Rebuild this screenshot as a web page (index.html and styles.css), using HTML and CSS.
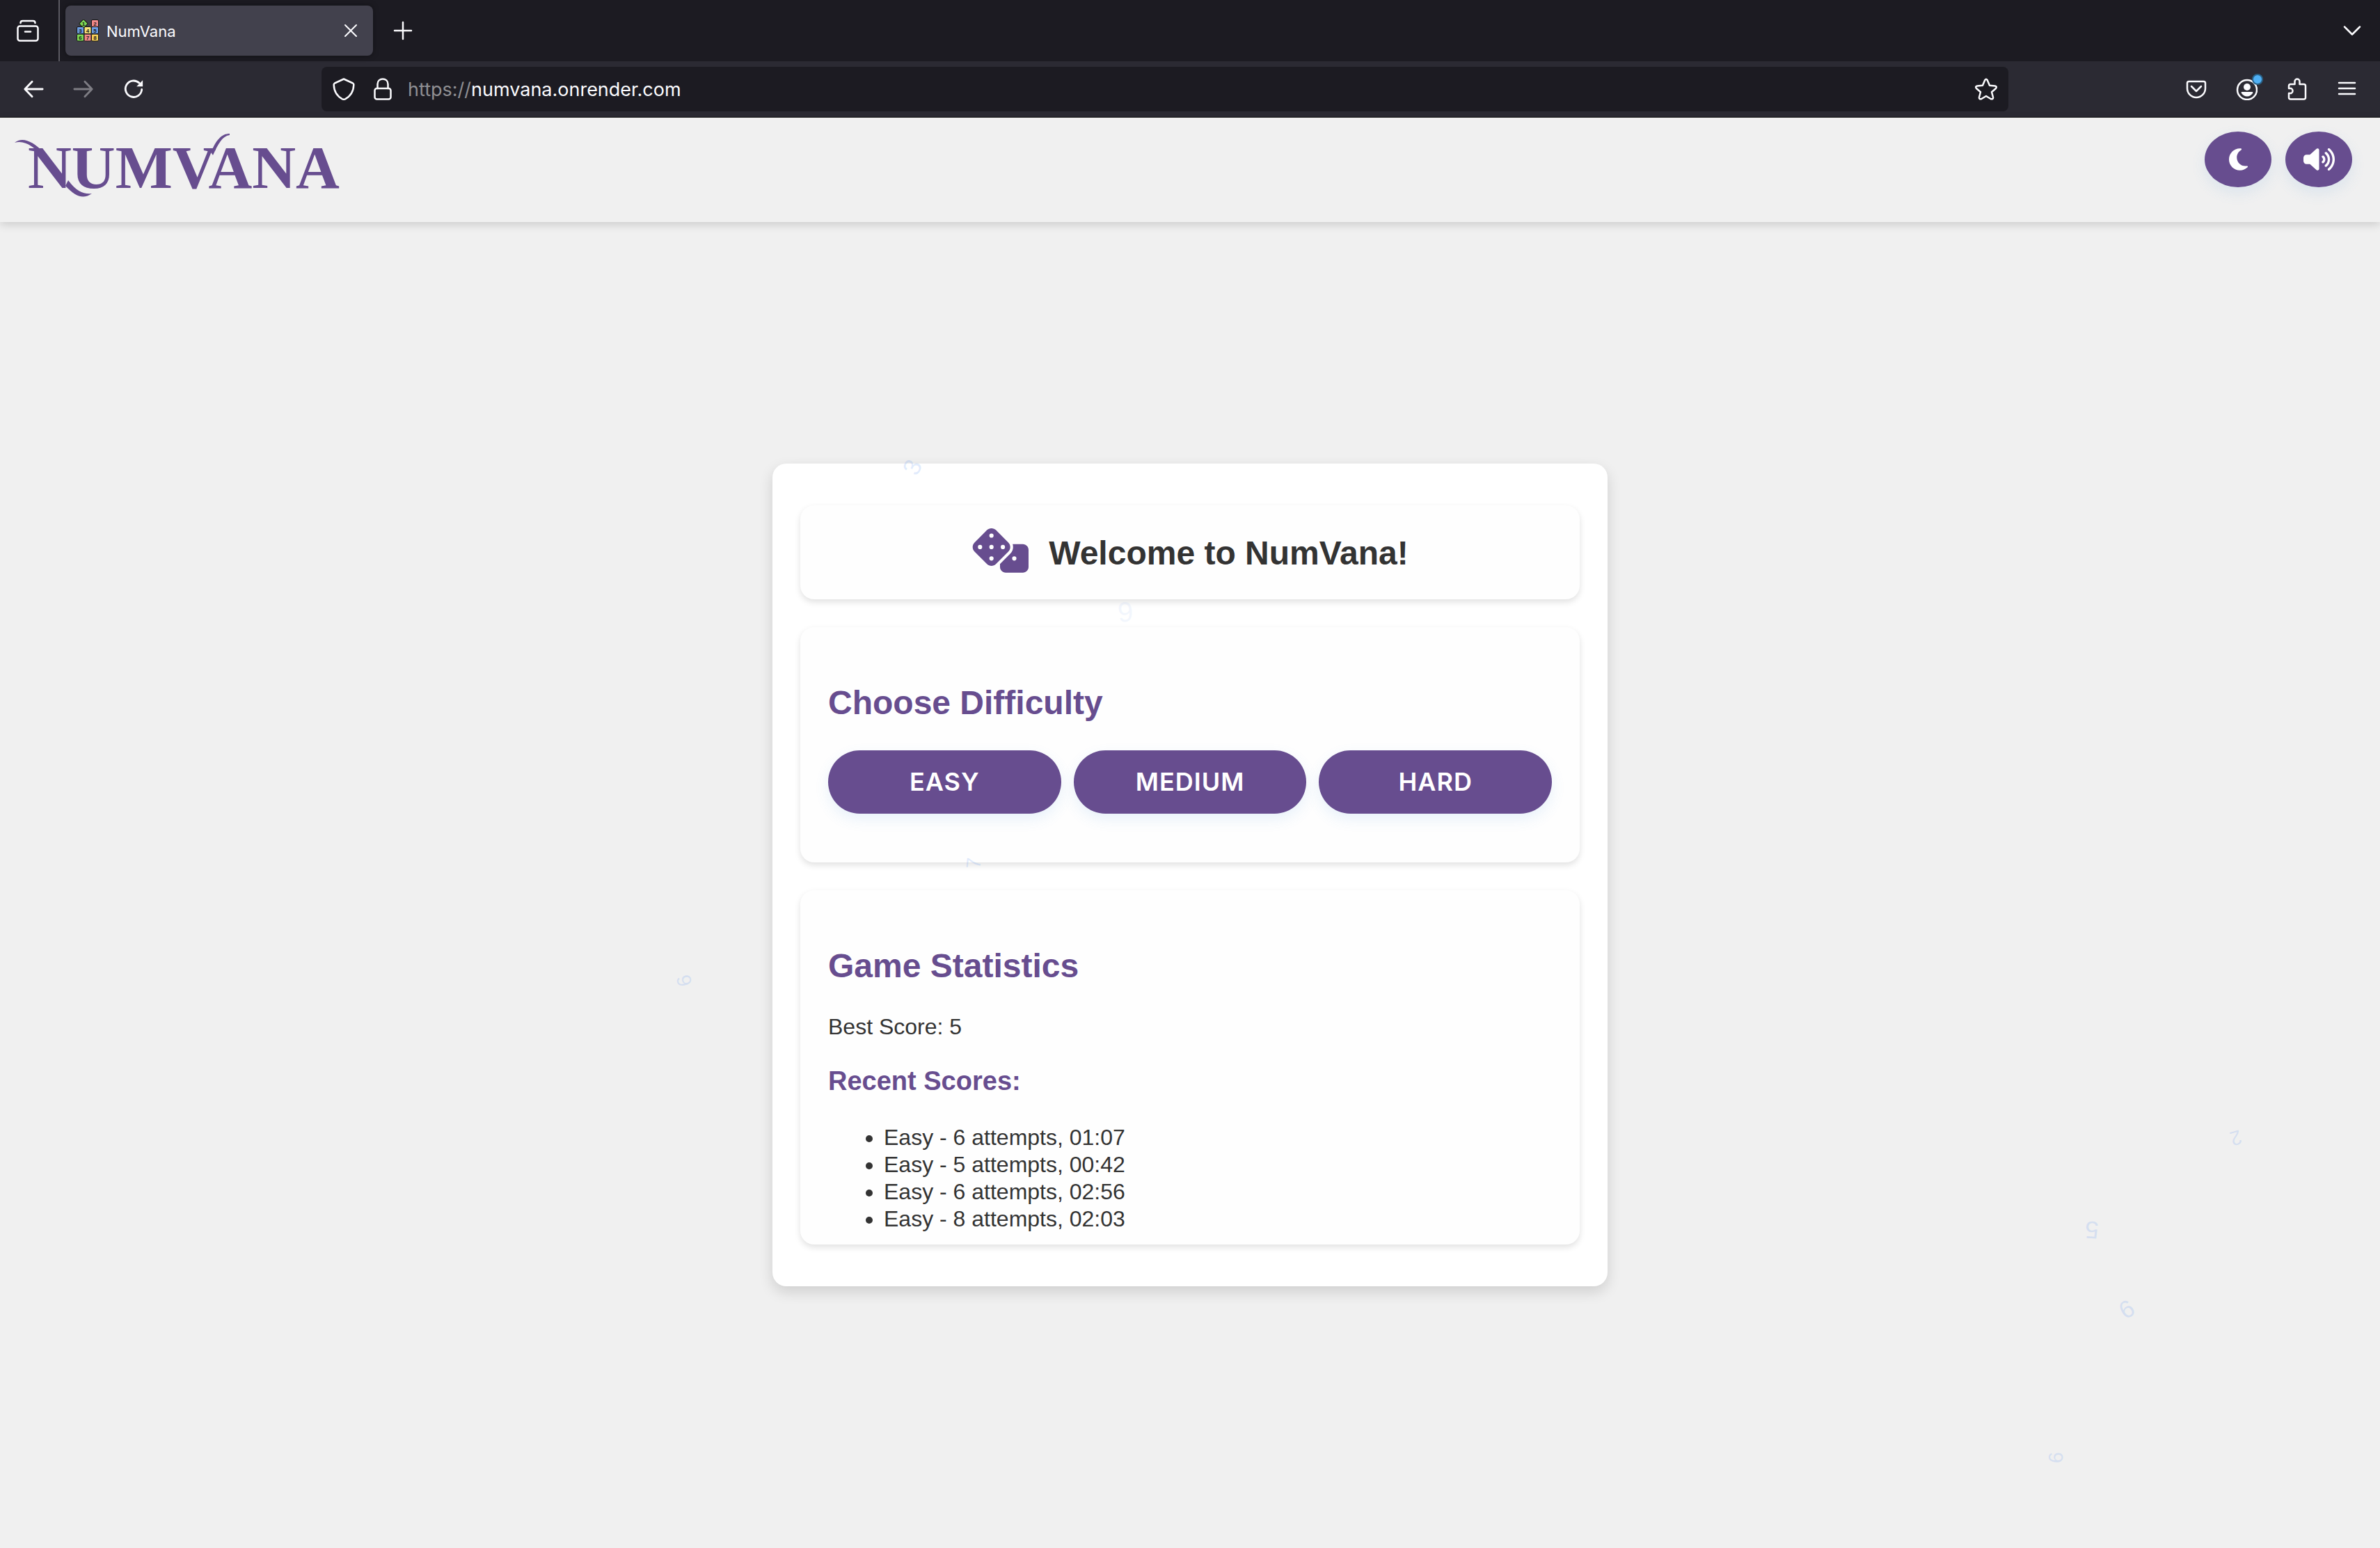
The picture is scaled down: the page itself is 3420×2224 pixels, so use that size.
FILE: index.html
```html
<!DOCTYPE html>
<html lang="en">
<head>
<meta charset="utf-8">
<title>NumVana</title>
<link rel="stylesheet" href="styles.css">
</head>
<body>
<div class="browser">
  <div class="tabstrip">
    <button class="tool view-button" aria-label="Recent browsing">
      <svg class="icon" viewBox="0 0 32 32"><path d="M5.500 5C5.500 2.500 7 2 8.500 2H23.500C25 2 26.500 2.500 26.500 5" /><rect x="1.500" y="9.500" width="29" height="21" rx="3"/><path d="M12 17.500H20"/></svg>
    </button>
    <div class="tab">
      <svg class="favicon" viewBox="0 0 32 32">
        <g stroke="#151515" stroke-width="1">
          <rect x="5.500" y="1.500" width="9" height="9" rx="1" fill="#7ed957" transform="rotate(45 10 6)"/>
          <rect x="21.500" y=".5" width="10" height="10" rx="1.500" fill="#f08a8a"/>
          <rect x=".5" y="10.500" width="10" height="10" rx="1.500" fill="#6b9be0"/>
          <rect x="11" y="10.500" width="10" height="10" rx="1.500" fill="#f6e27a"/>
          <rect x="21.500" y="10.500" width="10" height="10" rx="1.500" fill="#6b9be0"/>
          <rect x=".5" y="21" width="10" height="10" rx="1.500" fill="#7ed957"/>
          <rect x="11" y="21" width="10" height="10" rx="1.500" fill="#f08a8a"/>
          <rect x="21.500" y="21" width="10" height="10" rx="1.500" fill="#f6cf5a"/>
        </g>
        <g class="favicon-digits"><text x="10" y="9">1</text><text x="26.500" y="8.500">2</text><text x="5.500" y="18.500">3</text><text x="16" y="18.500">4</text><text x="26.500" y="18.500">5</text><text x="5.500" y="29">6</text><text x="16" y="29">7</text><text x="26.500" y="29">8</text></g>
      </svg>
      <span class="tab-title">NumVana</span>
      <button class="tab-close" aria-label="Close tab"><svg class="icon-small" viewBox="0 0 20 20"><path d="M2 2L18 18M18 2L2 18"/></svg></button>
    </div>
    <button class="tool new-tab" aria-label="New tab"><svg class="icon" viewBox="0 0 32 32"><path d="M16 4V28M4 16H28"/></svg></button>
    <button class="tool list-tabs" aria-label="List all tabs"><svg class="icon" viewBox="0 0 32 32"><path d="M5 10.500L16 21.500L27 10.500"/></svg></button>
  </div>
  <div class="toolbar">
    <button class="tool" aria-label="Back"><svg class="icon thick" viewBox="0 0 32 32"><path d="M30 16H3.500M14 4.500L3 16L14 27.500"/></svg></button>
    <button class="tool dim" aria-label="Forward" disabled><svg class="icon thick" viewBox="0 0 32 32"><path d="M2 16H28.500M18 4.500L29 16L18 27.500"/></svg></button>
    <button class="tool" aria-label="Reload"><svg class="icon thick" viewBox="0 0 32 32"><path d="M28.500 16.500A12.500 12.500 0 1 1 24.500 6.500"/><path d="M30 2.500V12H20.500Z" fill="currentColor" stroke="none"/></svg></button>
    <form class="urlbar">
      <button type="button" class="url-tool" aria-label="Tracking protection"><svg class="icon" viewBox="0 0 32 32"><path d="M16 1.500L29 7.500Q30.500 8.500 30.300 10C30 19 26 26 18 30.300Q16 31.300 14 30.300C6 26 2 19 1.700 10Q1.500 8.500 3 7.500Z"/></svg></button>
      <button type="button" class="url-tool" aria-label="Site information"><svg class="icon" viewBox="0 0 32 32"><rect x="4.500" y="15" width="23" height="15.500" rx="3"/><path d="M8.500 15V9C8.500 4 12 1.500 16 1.500S23.500 4 23.500 9V15"/></svg></button>
      <label class="scheme" for="url">https://</label>
      <input class="url" id="url" type="text" value="numvana.onrender.com">
      <button type="button" class="url-tool" aria-label="Bookmark this page"><svg class="icon" viewBox="0 0 32 32"><path d="M14.200 3.200Q16 .5 17.800 3.200L21 10.700L28.800 11.500Q32 12.300 30 15L24 20.200L26 27.800Q26.300 31 23 30.200L16 26L9 30.200Q5.700 31 6 27.800L8 20.200L2 15Q0 12.300 3.200 11.500L11 10.700Z"/></svg></button>
    </form>
    <button class="tool" aria-label="Save to Pocket"><svg class="icon" viewBox="0 0 32 32"><path d="M5.500 5H26.500Q29 5 29 7.500V15A13 13 0 0 1 3 15V7.500Q3 5 5.500 5Z"/><path d="M9 12L16 19L23 12"/></svg></button>
    <button class="tool account" aria-label="Account"><svg class="icon" viewBox="0 0 32 32"><circle cx="17" cy="17" r="14"/><g fill="currentColor" stroke="none"><circle cx="17" cy="13" r="5"/><path d="M9.500 20H24.500Q26 20.500 25 22A9.500 9.500 0 0 1 9 22Q8 20.500 9.500 20Z"/></g></svg><span class="badge"></span></button>
    <button class="tool" aria-label="Extensions"><svg class="icon" viewBox="0 0 32 32"><path d="M7.500 9H13.500V5A3.500 3.500 0 0 1 20.500 5V9H26.500Q29 9 29 11.500V28Q29 30.500 26.500 30.500H7.500Q5 30.500 5 28V22H8.500A4 4 0 0 0 8.500 15H5V11.500Q5 9 7.500 9Z"/></svg></button>
    <button class="tool" aria-label="Menu"><svg class="icon" viewBox="0 0 32 32"><path d="M5 7H28M5 15H28M5 23H28"/></svg></button>
  </div>
</div>

<header class="header">
  <a class="logo" href="#">
    <span class="wordmark">NUMVANA</span>
    <svg class="flourish" viewBox="0 0 480 110">
      <path d="M1 16C12 7 27 14 42 29L42 37C29 22 16 12 1 16Z"/>
      <path d="M78 70C91 87 100 90 112 89C99 98 88 93 74 78Z"/>
      <path d="M283 30C291 11 299 3 310 3V5C299 7 294 17 286 34Z"/>
    </svg>
  </a>
  <div class="header-actions">
    <button class="round" aria-label="Dark mode"><svg class="glyph" viewBox="0 0 384 512"><path d="M223.500 32C100 32 0 132.300 0 256S100 480 223.500 480c60.600 0 115.500-24.200 155.800-63.400c5-4.900 6.300-12.500 3.100-18.700s-10.100-9.700-17-8.500c-9.800 1.700-19.800 2.600-30.100 2.600c-96.900 0-175.500-78.800-175.500-176c0-65.800 36-123.100 89.300-153.300c6.100-3.500 9.200-10.500 7.700-17.300s-7.300-11.900-14.300-12.500c-6.300-.5-12.600-.8-19-.8z"/></svg></button>
    <button class="round" aria-label="Sound"><svg class="glyph" viewBox="0 0 640 512"><path d="M533.600 32.500C598.500 85.300 640 165.800 640 256s-41.500 170.800-106.400 223.500c-10.300 8.400-25.400 6.800-33.800-3.500s-6.800-25.400 3.500-33.800C557.500 398.200 592 331.200 592 256s-34.500-142.200-88.700-186.300c-10.300-8.400-11.800-23.500-3.500-33.800s23.500-11.800 33.800-3.500zM473.100 107c43.200 35.200 70.900 88.900 70.900 149s-27.700 113.800-70.900 149c-10.300 8.400-25.400 6.800-33.800-3.500s-6.800-25.400 3.500-33.800C475.300 341.300 496 301.100 496 256s-20.700-85.300-53.200-111.800c-10.300-8.400-11.800-23.500-3.500-33.800s23.500-11.800 33.800-3.500zm-60.500 74.500C434.100 199.100 448 225.900 448 256s-13.900 56.900-35.400 74.500c-10.300 8.400-25.400 6.800-33.800-3.500s-6.800-25.400 3.500-33.800C393.100 284.400 400 271 400 256s-6.900-28.400-17.700-37.300c-10.300-8.400-11.800-23.500-3.500-33.800s23.500-11.800 33.800-3.500zM301.100 34.800C312.600 40 320 51.400 320 64V448c0 12.600-7.400 24-18.900 29.200s-25 3.100-34.400-5.300L131.800 352H64c-35.300 0-64-28.700-64-64V224c0-35.300 28.700-64 64-64h67.800L266.700 40.100c9.400-8.400 22.900-10.400 34.400-5.200z"/></svg></button>
  </div>
</header>

<main class="main">
  <div class="card">
    <section class="panel welcome">
      <svg class="dice" viewBox="0 0 640 512"><path d="M274.900 34.300c-28.100-28.100-73.700-28.100-101.800 0L34.300 173.100c-28.100 28.100-28.100 73.700 0 101.800L173.100 413.700c28.100 28.100 73.700 28.100 101.800 0L413.700 274.900c28.100-28.100 28.100-73.700 0-101.800L274.900 34.300zM200 224a24 24 0 1 1 48 0 24 24 0 1 1 -48 0zM96 200a24 24 0 1 1 0 48 24 24 0 1 1 0-48zM224 376a24 24 0 1 1 0-48 24 24 0 1 1 0 48zM352 200a24 24 0 1 1 0 48 24 24 0 1 1 0-48zM224 120a24 24 0 1 1 0-48 24 24 0 1 1 0 48zm96 328c0 35.300 28.700 64 64 64H576c35.300 0 64-28.700 64-64V256c0-35.300-28.700-64-64-64H461.700c11.600 36 3.100 77-25.400 105.500L320 413.800V448zM480 328a24 24 0 1 1 0 48 24 24 0 1 1 0-48z"/></svg>
      <h1 class="title">Welcome to NumVana!</h1>
    </section>
    <section class="panel difficulty">
      <h2 class="heading">Choose Difficulty</h2>
      <div class="levels">
        <button class="level">EASY</button>
        <button class="level">MEDIUM</button>
        <button class="level">HARD</button>
      </div>
    </section>
    <section class="panel stats">
      <h2 class="heading">Game Statistics</h2>
      <p class="best">Best Score: 5</p>
      <h3 class="subheading">Recent Scores:</h3>
      <ul class="scores">
        <li>Easy - 6 attempts, 01:07</li>
        <li>Easy - 5 attempts, 00:42</li>
        <li>Easy - 6 attempts, 02:56</li>
        <li>Easy - 8 attempts, 02:03</li>
      </ul>
    </section>
  </div>
</main>

<div class="drift" aria-hidden="true">
  <span class="digit large d1">3</span>
  <span class="digit huge d2">9</span>
  <span class="digit d3">7</span>
  <span class="digit d4">6</span>
  <span class="digit d5">2</span>
  <span class="digit large d6">5</span>
  <span class="digit large d7">6</span>
  <span class="digit d8">6</span>
</div>
</body>
</html>
```

FILE: styles.css
```css
* { box-sizing: border-box; }

body {
  position: relative;
  display: flex;
  flex-direction: column;
  min-height: 100vh;
  margin: 0;
  background: #f0f0f0;
  color: #333;
  font-family: "Liberation Sans", Arial, sans-serif;
  font-size: 32px;
  line-height: 39px;
}

button {
  border: 0;
  padding: 0;
  background: none;
  color: inherit;
  font: inherit;
}

/* Browser chrome */
.browser {
  border-bottom: 1px solid #0c0c0d;
  background: #2b2a33;
  color: #fbfbfe;
  font-family: Inter, "Liberation Sans", sans-serif;
}

.tabstrip {
  display: flex;
  align-items: center;
  height: 88px;
  background: #1c1b22;
}

.tool,
.url-tool {
  display: flex;
  align-items: center;
  justify-content: center;
  width: 72px;
  height: 64px;
}

.icon {
  width: 32px;
  height: 32px;
  fill: none;
  stroke: currentColor;
  stroke-width: 2.5;
  stroke-linecap: round;
  stroke-linejoin: round;
}

.thick { width: 30px; height: 30px; stroke-width: 3; }

.view-button {
  width: 86px;
  height: 88px;
  padding-right: 4px;
  border-right: 2px solid #5b5a62;
}

.tab {
  display: flex;
  align-items: center;
  width: 442px;
  height: 72px;
  margin: 0 7px 0 8px;
  padding: 0 16px;
  border-radius: 8px;
  background: #42414d;
  box-shadow: 0 0 8px rgba(0, 0, 0, 0.4);
}

.favicon { width: 32px; height: 32px; }

.favicon-digits {
  font: bold 8px "Liberation Sans", sans-serif;
  text-anchor: middle;
  fill: #151515;
}

.tab-title {
  flex: 1;
  margin-left: 11px;
  padding-top: 2px;
  font-size: 22px;
  line-height: 32px;
}

.tab-close { display: flex; padding: 6px; }

.icon-small {
  width: 20px;
  height: 20px;
  fill: none;
  stroke: currentColor;
  stroke-width: 2;
  stroke-linecap: round;
}

.list-tabs { margin-left: auto; margin-right: 4px; }

.toolbar {
  display: flex;
  align-items: center;
  padding: 8px 12px;
}

.dim { color: #7e7d84; }

.urlbar {
  display: flex;
  flex: 1;
  align-items: center;
  margin: 0 234px;
  padding: 0 4px;
  border-radius: 8px;
  background: #1c1b22;
  font-size: 27px;
}

.url-tool { width: 56px; }

.scheme { margin-left: 8px; color: #8f8f93; }

.url {
  flex: 1;
  min-width: 0;
  padding: 0;
  border: 0;
  outline: 0;
  background: none;
  color: inherit;
  font: inherit;
}

.account { position: relative; }

.badge {
  position: absolute;
  top: 10px;
  right: 12px;
  width: 16px;
  height: 16px;
  border: 2px solid #2b6288;
  border-radius: 50%;
  background: #4fb0f5;
}

/* Page header */
.header {
  display: flex;
  align-items: flex-start;
  justify-content: space-between;
  padding: 20px 40px 20px 20px;
  box-shadow: 0 4px 12px rgba(0, 0, 0, 0.15);
}

.logo {
  position: relative;
  display: block;
  height: 110px;
  padding-left: 20px;
  color: #674d8f;
  text-decoration: none;
}

.wordmark {
  font-family: "Liberation Serif", serif;
  font-size: 87px;
  font-weight: bold;
  line-height: 104px;
}

.flourish {
  position: absolute;
  top: 0;
  left: 0;
  width: 480px;
  height: 110px;
  fill: currentColor;
}

.header-actions { display: flex; gap: 20px; }

.round {
  display: flex;
  align-items: center;
  justify-content: center;
  width: 96px;
  height: 80px;
  border-radius: 50%;
  background: #674d8f;
  box-shadow: 0 8px 20px rgba(74, 144, 226, 0.12);
}

.glyph { height: 36px; fill: #fff; }

/* Game card */
.main {
  display: flex;
  flex: 1;
  align-items: center;
  justify-content: center;
  padding-bottom: 29px;
}

.card {
  display: flex;
  flex-direction: column;
  gap: 40px;
  width: 1200px;
  max-width: 100%;
  padding: 60px 40px;
  border-radius: 20px;
  background: #fff;
  box-shadow: 0 8px 20px rgba(0, 0, 0, 0.14);
}

.panel {
  padding: 80px 40px 17px;
  border-radius: 20px;
  background: #fefefe;
  box-shadow: 0 4px 10px rgba(0, 0, 0, 0.12);
}

.welcome {
  display: flex;
  align-items: flex-end;
  justify-content: center;
  gap: 29px;
  padding: 31px 40px 38px;
}

.dice { width: 82px; height: 66px; fill: #674d8f; }

.title,
.heading {
  margin: 0;
  font-size: 48px;
  line-height: 57px;
}

.heading { margin-bottom: 40px; color: #674d8f; }

.difficulty { padding-bottom: 70px; }

.levels { display: flex; gap: 18px; }

.level {
  flex: 1;
  padding: 24px 0;
  border-radius: 46px;
  background: #674d8f;
  box-shadow: 0 8px 20px rgba(74, 144, 226, 0.12);
  color: #fff;
  font-family: Inter, "Liberation Sans", sans-serif;
  font-size: 36px;
  font-weight: 600;
  letter-spacing: 1px;
  line-height: 43px;
}

.best { margin: 0; }

.subheading {
  margin: 36px 0 40px;
  color: #674d8f;
  font-size: 38px;
  line-height: 44px;
}

.scores { margin: 0; padding-left: 80px; }

/* Drifting background digits */
.drift {
  position: absolute;
  inset: 0;
  overflow: hidden;
  pointer-events: none;
}

.digit {
  position: absolute;
  width: 40px;
  height: 40px;
  color: rgba(100, 150, 240, 0.2);
  font-size: 29px;
  line-height: 40px;
  text-align: center;
}

.large { font-size: 35px; }
.huge { font-size: 40px; }

.d1 { left: 1291px; top: 651px; transform: rotate(-65deg); }
.d2 { left: 1597px; top: 859px; opacity: 0.4; transform: rotate(-4deg); }
.d3 { left: 1379px; top: 1220px; transform: rotate(-85deg); }
.d4 { left: 963px; top: 1389px; transform: rotate(-105deg); }
.d5 { left: 3193px; top: 1615px; transform: rotate(163deg); }
.d6 { left: 2986px; top: 1747px; transform: rotate(183deg); }
.d7 { left: 3036px; top: 1861px; transform: rotate(-30deg); }
.d8 { left: 2934px; top: 2074px; transform: rotate(-88deg); }
```
